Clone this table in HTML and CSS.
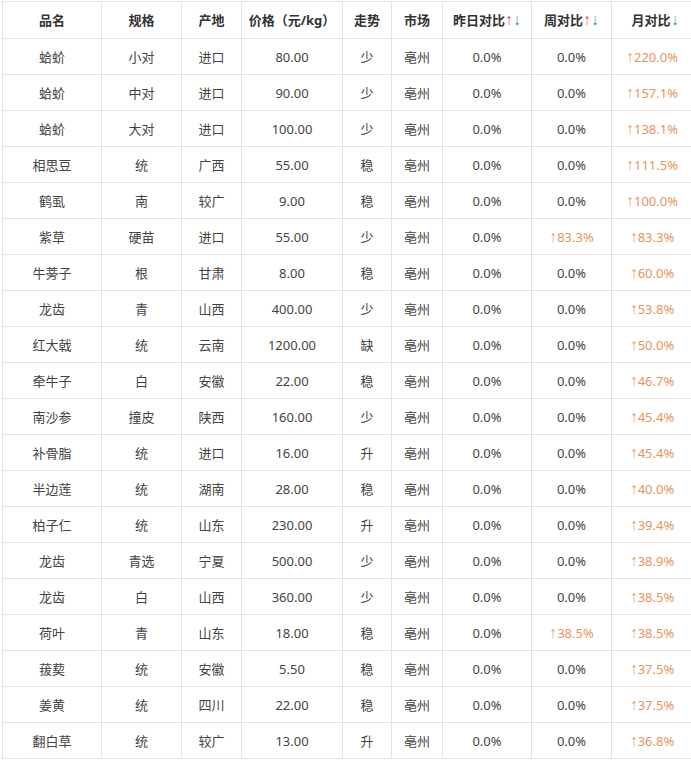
FILE: index.html
```html
<!DOCTYPE html>
<html lang="zh-CN">
<head>
<meta charset="utf-8">
<title>药材价格涨幅</title>
<link rel="stylesheet" href="styles.css">
</head>
<body>
<table class="price-table">
<colgroup>
<col class="c-name"><col class="c-spec"><col class="c-origin"><col class="c-price"><col class="c-trend"><col class="c-market"><col class="c-day"><col class="c-week"><col class="c-month">
</colgroup>
<thead>
<tr>
<th>品名</th><th>规格</th><th>产地</th><th>价格（元/kg）</th><th>走势</th><th>市场</th>
<th>昨日对比<span class="up">↑</span><span class="down">↓</span></th>
<th>周对比<span class="up">↑</span><span class="down">↓</span></th>
<th>月对比<span class="down">↓</span></th>
</tr>
</thead>
<tbody>
<tr><td>蛤蚧</td><td>小对</td><td>进口</td><td>80.00</td><td>少</td><td>亳州</td><td>0.0%</td><td>0.0%</td><td class="rise"><span class="arr">↑</span>220.0%</td></tr>
<tr><td>蛤蚧</td><td>中对</td><td>进口</td><td>90.00</td><td>少</td><td>亳州</td><td>0.0%</td><td>0.0%</td><td class="rise"><span class="arr">↑</span>157.1%</td></tr>
<tr><td>蛤蚧</td><td>大对</td><td>进口</td><td>100.00</td><td>少</td><td>亳州</td><td>0.0%</td><td>0.0%</td><td class="rise"><span class="arr">↑</span>138.1%</td></tr>
<tr><td>相思豆</td><td>统</td><td>广西</td><td>55.00</td><td>稳</td><td>亳州</td><td>0.0%</td><td>0.0%</td><td class="rise"><span class="arr">↑</span>111.5%</td></tr>
<tr><td>鹤虱</td><td>南</td><td>较广</td><td>9.00</td><td>稳</td><td>亳州</td><td>0.0%</td><td>0.0%</td><td class="rise"><span class="arr">↑</span>100.0%</td></tr>
<tr><td>紫草</td><td>硬苗</td><td>进口</td><td>55.00</td><td>少</td><td>亳州</td><td>0.0%</td><td class="rise"><span class="arr">↑</span>83.3%</td><td class="rise"><span class="arr">↑</span>83.3%</td></tr>
<tr><td>牛蒡子</td><td>根</td><td>甘肃</td><td>8.00</td><td>稳</td><td>亳州</td><td>0.0%</td><td>0.0%</td><td class="rise"><span class="arr">↑</span>60.0%</td></tr>
<tr><td>龙齿</td><td>青</td><td>山西</td><td>400.00</td><td>少</td><td>亳州</td><td>0.0%</td><td>0.0%</td><td class="rise"><span class="arr">↑</span>53.8%</td></tr>
<tr><td>红大戟</td><td>统</td><td>云南</td><td>1200.00</td><td>缺</td><td>亳州</td><td>0.0%</td><td>0.0%</td><td class="rise"><span class="arr">↑</span>50.0%</td></tr>
<tr><td>牵牛子</td><td>白</td><td>安徽</td><td>22.00</td><td>稳</td><td>亳州</td><td>0.0%</td><td>0.0%</td><td class="rise"><span class="arr">↑</span>46.7%</td></tr>
<tr><td>南沙参</td><td>撞皮</td><td>陕西</td><td>160.00</td><td>少</td><td>亳州</td><td>0.0%</td><td>0.0%</td><td class="rise"><span class="arr">↑</span>45.4%</td></tr>
<tr><td>补骨脂</td><td>统</td><td>进口</td><td>16.00</td><td>升</td><td>亳州</td><td>0.0%</td><td>0.0%</td><td class="rise"><span class="arr">↑</span>45.4%</td></tr>
<tr><td>半边莲</td><td>统</td><td>湖南</td><td>28.00</td><td>稳</td><td>亳州</td><td>0.0%</td><td>0.0%</td><td class="rise"><span class="arr">↑</span>40.0%</td></tr>
<tr><td>柏子仁</td><td>统</td><td>山东</td><td>230.00</td><td>升</td><td>亳州</td><td>0.0%</td><td>0.0%</td><td class="rise"><span class="arr">↑</span>39.4%</td></tr>
<tr><td>龙齿</td><td>青选</td><td>宁夏</td><td>500.00</td><td>少</td><td>亳州</td><td>0.0%</td><td>0.0%</td><td class="rise"><span class="arr">↑</span>38.9%</td></tr>
<tr><td>龙齿</td><td>白</td><td>山西</td><td>360.00</td><td>少</td><td>亳州</td><td>0.0%</td><td>0.0%</td><td class="rise"><span class="arr">↑</span>38.5%</td></tr>
<tr><td>荷叶</td><td>青</td><td>山东</td><td>18.00</td><td>稳</td><td>亳州</td><td>0.0%</td><td class="rise"><span class="arr">↑</span>38.5%</td><td class="rise"><span class="arr">↑</span>38.5%</td></tr>
<tr><td>菝葜</td><td>统</td><td>安徽</td><td>5.50</td><td>稳</td><td>亳州</td><td>0.0%</td><td>0.0%</td><td class="rise"><span class="arr">↑</span>37.5%</td></tr>
<tr><td>姜黄</td><td>统</td><td>四川</td><td>22.00</td><td>稳</td><td>亳州</td><td>0.0%</td><td>0.0%</td><td class="rise"><span class="arr">↑</span>37.5%</td></tr>
<tr><td>翻白草</td><td>统</td><td>较广</td><td>13.00</td><td>升</td><td>亳州</td><td>0.0%</td><td>0.0%</td><td class="rise"><span class="arr">↑</span>36.8%</td></tr>
</tbody>
</table>
</body>
</html>
```
FILE: styles.css
```css
html, body {
  margin: 0;
  padding: 0;
  background: #fff;
  overflow: hidden;
}
body {
  padding: 1px 0 0 2px;
  font-family: "Noto Sans", "Noto Sans CJK SC", sans-serif;
  font-size: 13px;
  color: #444;
}
.price-table {
  border-collapse: collapse;
  table-layout: fixed;
  width: 696px;
}
.c-name { width: 99px; }
.c-spec { width: 80px; }
.c-origin { width: 60px; }
.c-price { width: 101px; }
.c-trend { width: 49px; }
.c-market { width: 51px; }
.c-day { width: 89px; }
.c-week { width: 80px; }
.c-month { width: 87px; }
.price-table th,
.price-table td {
  border: 1px solid #e2e2e2;
  text-align: center;
  padding: 0;
  white-space: nowrap;
  line-height: 18px;
}
.price-table td:last-child {
  padding-right: 6px;
}
.price-table th {
  height: 36px;
  font-weight: bold;
  color: #333;
}
.price-table td {
  height: 35px;
}
.up, .down, .arr {
  font-family: "Liberation Sans", sans-serif;
  font-weight: normal;
  font-size: 16px;
  line-height: 12px;
  display: inline-block;
  transform: scaleX(0.85);
}
.up { color: #e2403a; }
.down { color: #2f9a45; }
.rise { color: #e8945c; }
```
